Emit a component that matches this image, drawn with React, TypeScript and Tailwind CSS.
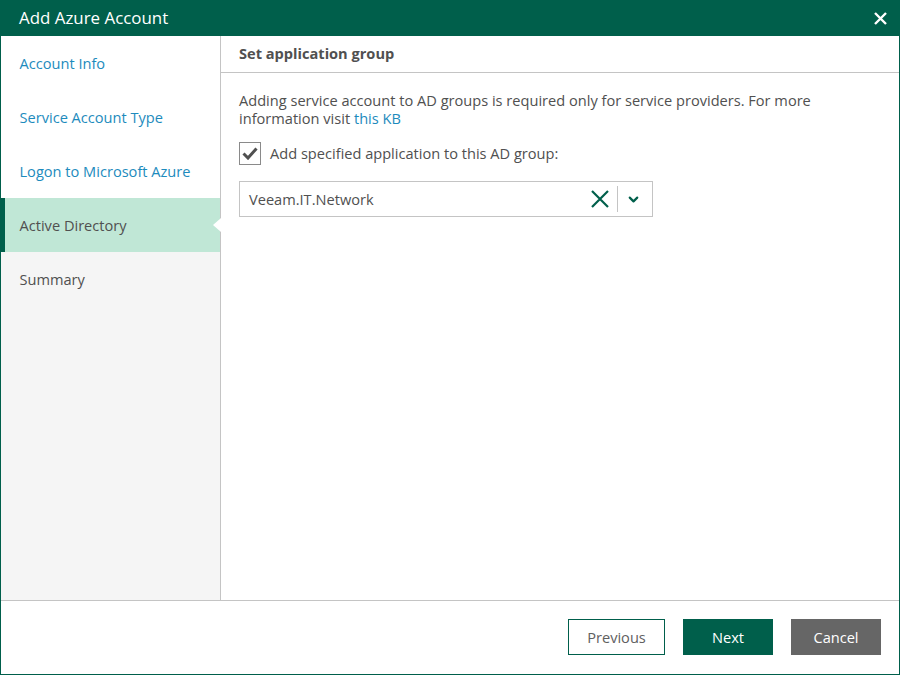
import { ChevronDown } from "lucide-react";

const steps = [
  { label: "Account Info", state: "done" },
  { label: "Service Account Type", state: "done" },
  { label: "Logon to Microsoft Azure", state: "done" },
  { label: "Active Directory", state: "active" },
  { label: "Summary", state: "todo" },
];

function Cross({ size, width, className }: { size: number; width: number; className: string }) {
  return (
    <svg width={size} height={size} viewBox={`0 0 ${size} ${size}`} className={className} fill="none" stroke="currentColor" strokeWidth={width}>
      <path d={`M1 1L${size - 1} ${size - 1}M${size - 1} 1L1 ${size - 1}`} />
    </svg>
  );
}

function StepRow({ label, state }: { label: string; state: string }) {
  if (state === "active") {
    return (
      <div className="relative flex h-[54px] items-center border-l-4 border-[#005f4b] bg-[#c0e7d6] pl-[14.5px] pt-[1px] text-[#505050]">
        {label}
        <div className="absolute right-[-1px] top-[20px] h-0 w-0 border-y-[7px] border-r-[8px] border-y-transparent border-r-white" />
      </div>
    );
  }
  return (
    <div className={`flex h-[54px] items-center pl-[18.5px] pt-[1px] ${state === "done" ? "bg-white text-[#1d8bbd]" : "text-[#505050]"}`}>
      {label}
    </div>
  );
}

export default function App() {
  return (
    <div className="flex h-[675px] w-[900px] flex-col border border-t-0 border-[#005f4b] bg-white font-['Open_Sans',sans-serif] text-[14.6px] text-[#505050]">
      <div className="flex h-9 shrink-0 items-center justify-between bg-[#005f4b] pl-[18px] pr-[12px] text-white">
        <span className="text-[16.9px]">Add Azure Account</span>
        <Cross size={13} width={2.4} className="" />
      </div>

      <div className="flex min-h-0 flex-1">
        <div className="w-[220px] shrink-0 border-r border-[#c4c4c4] bg-[#f5f5f5]">
          {steps.map((s) => (
            <StepRow key={s.label} label={s.label} state={s.state} />
          ))}
        </div>

        <div className="flex-1">
          <div className="flex h-[37px] items-center border-b border-[#c4c4c4] pl-[18px] font-bold text-[#505050]">
            Set application group
          </div>
          <div className="pl-[18px] pt-[18px]">
            <p className="w-[600px] leading-[18px]">
              Adding service account to AD groups is required only for service providers. For more information visit{" "}
              <span className="text-[#1d8bbd]">this KB</span>
            </p>
            <div className="mt-[15px] flex items-center gap-[9px]">
              <div className="flex h-[23px] w-[22px] items-center justify-center border border-[#8a8a8a]">
                <svg width="16" height="13" viewBox="0 0 16 13" fill="none" stroke="#505050" strokeWidth="3">
                  <path d="M1.5 6.5L6 11L14.5 1.5" />
                </svg>
              </div>
              <span className="pt-[1px]">Add specified application to this AD group:</span>
            </div>
            <div className="mt-[16px] flex h-9 w-[414px] items-center border border-[#c4c4c4] pl-[9px]">
              <span className="flex-1 pt-[1px]">Veeam.IT.Network</span>
              <Cross size={18} width={2.2} className="text-[#005f4b]" />
              <div className="ml-[8px] h-[26px] w-px bg-[#c4c4c4]" />
              <div className="flex w-[32px] justify-center pr-[1px]">
                <ChevronDown className="h-[15px] w-[15px] text-[#005f4b]" strokeWidth={3.5} />
              </div>
              <div className="w-[2px]" />
            </div>
          </div>
        </div>
      </div>

      <div className="flex h-[74px] shrink-0 items-center justify-end gap-[18px] border-t border-[#c4c4c4] pr-[18px] pb-[1px]">
        <button className="h-9 w-[97px] border border-[#005f4b] pt-[1px] text-[#606060]">Previous</button>
        <button className="h-9 w-[90px] bg-[#005f4b] pt-[1px] text-white">Next</button>
        <button className="h-9 w-[90px] bg-[#666666] pt-[1px] text-white">Cancel</button>
      </div>
    </div>
  );
}
